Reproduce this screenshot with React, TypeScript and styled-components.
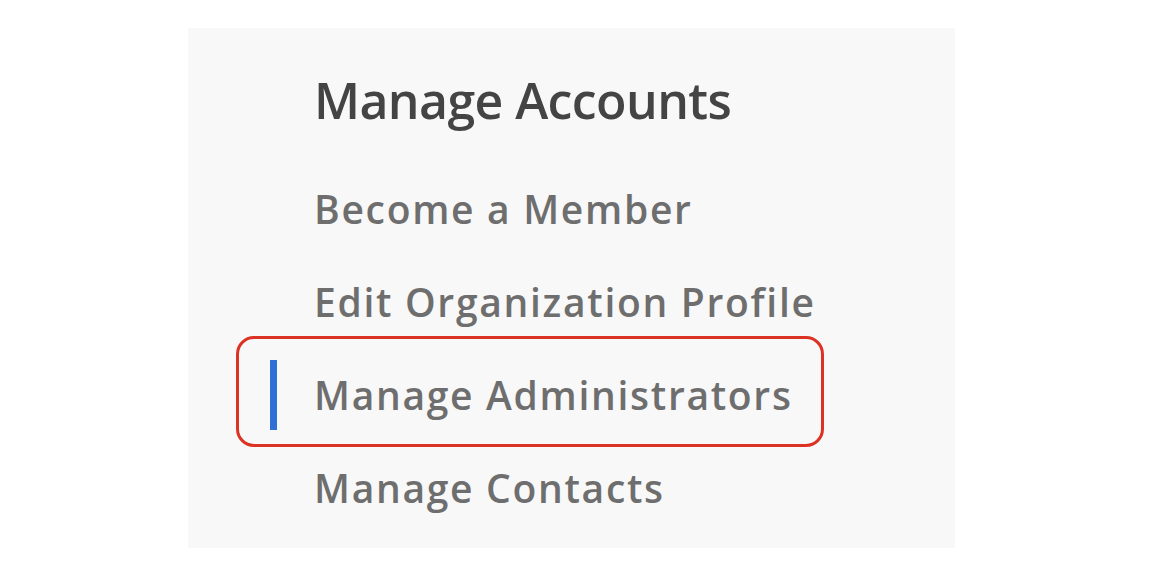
import React from "react";
import styled, { createGlobalStyle } from "styled-components";

const Global = createGlobalStyle`
  html, body { margin: 0; padding: 0; background: #ffffff; }
  body { font-family: "Open Sans", "Noto Sans", sans-serif; }
`;

const Page = styled.div`
  width: 1152px;
  height: 574px;
  padding: 28px 0 0 188px;
  box-sizing: border-box;
  background: #ffffff;
`;

const Panel = styled.nav`
  width: 767px;
  height: 520px;
  background: #f8f8f8;
  box-sizing: border-box;
  padding: 42px 0 0 82px;
  display: flex;
  flex-direction: column;
`;

const Heading = styled.h2`
  margin: 0 0 0 44px;
  font-size: 50px;
  line-height: 60px;
  font-weight: 600;
  color: #444444;
  letter-spacing: -0.6px;
`;

const List = styled.ul`
  list-style: none;
  margin: 32px 0 0 0;
  padding: 0;
  display: flex;
  flex-direction: column;
`;

const Item = styled.li`
  position: relative;
  display: grid;
  grid-template-columns: 7px auto;
  column-gap: 37px;
  align-items: center;
  height: 93px;
`;

const Bar = styled.span<{ $active?: boolean }>`
  width: 7px;
  height: 70px;
  background: ${(p) => (p.$active ? "#2f6fd6" : "transparent")};
`;

const Label = styled.a`
  font-size: 39px;
  line-height: 50px;
  font-weight: 600;
  color: #6e6e6e;
  letter-spacing: 1.7px;
  text-decoration: none;
`;

const Highlight = styled.span`
  position: absolute;
  left: -34px;
  top: -12px;
  width: 588px;
  height: 111px;
  box-sizing: border-box;
  border: 3px solid #dc3223;
  border-radius: 18px;
  pointer-events: none;
`;

const items = [
  "Become a Member",
  "Edit Organization Profile",
  "Manage Administrators",
  "Manage Contacts",
];

export default function App() {
  return (
    <Page>
      <Global />
      <Panel>
        <Heading>Manage Accounts</Heading>
        <List>
          {items.map((t, i) => {
            const active = i === 2;
            return (
              <Item key={t}>
                <Bar $active={active} />
                <Label>{t}</Label>
                {active && <Highlight />}
              </Item>
            );
          })}
        </List>
      </Panel>
    </Page>
  );
}
